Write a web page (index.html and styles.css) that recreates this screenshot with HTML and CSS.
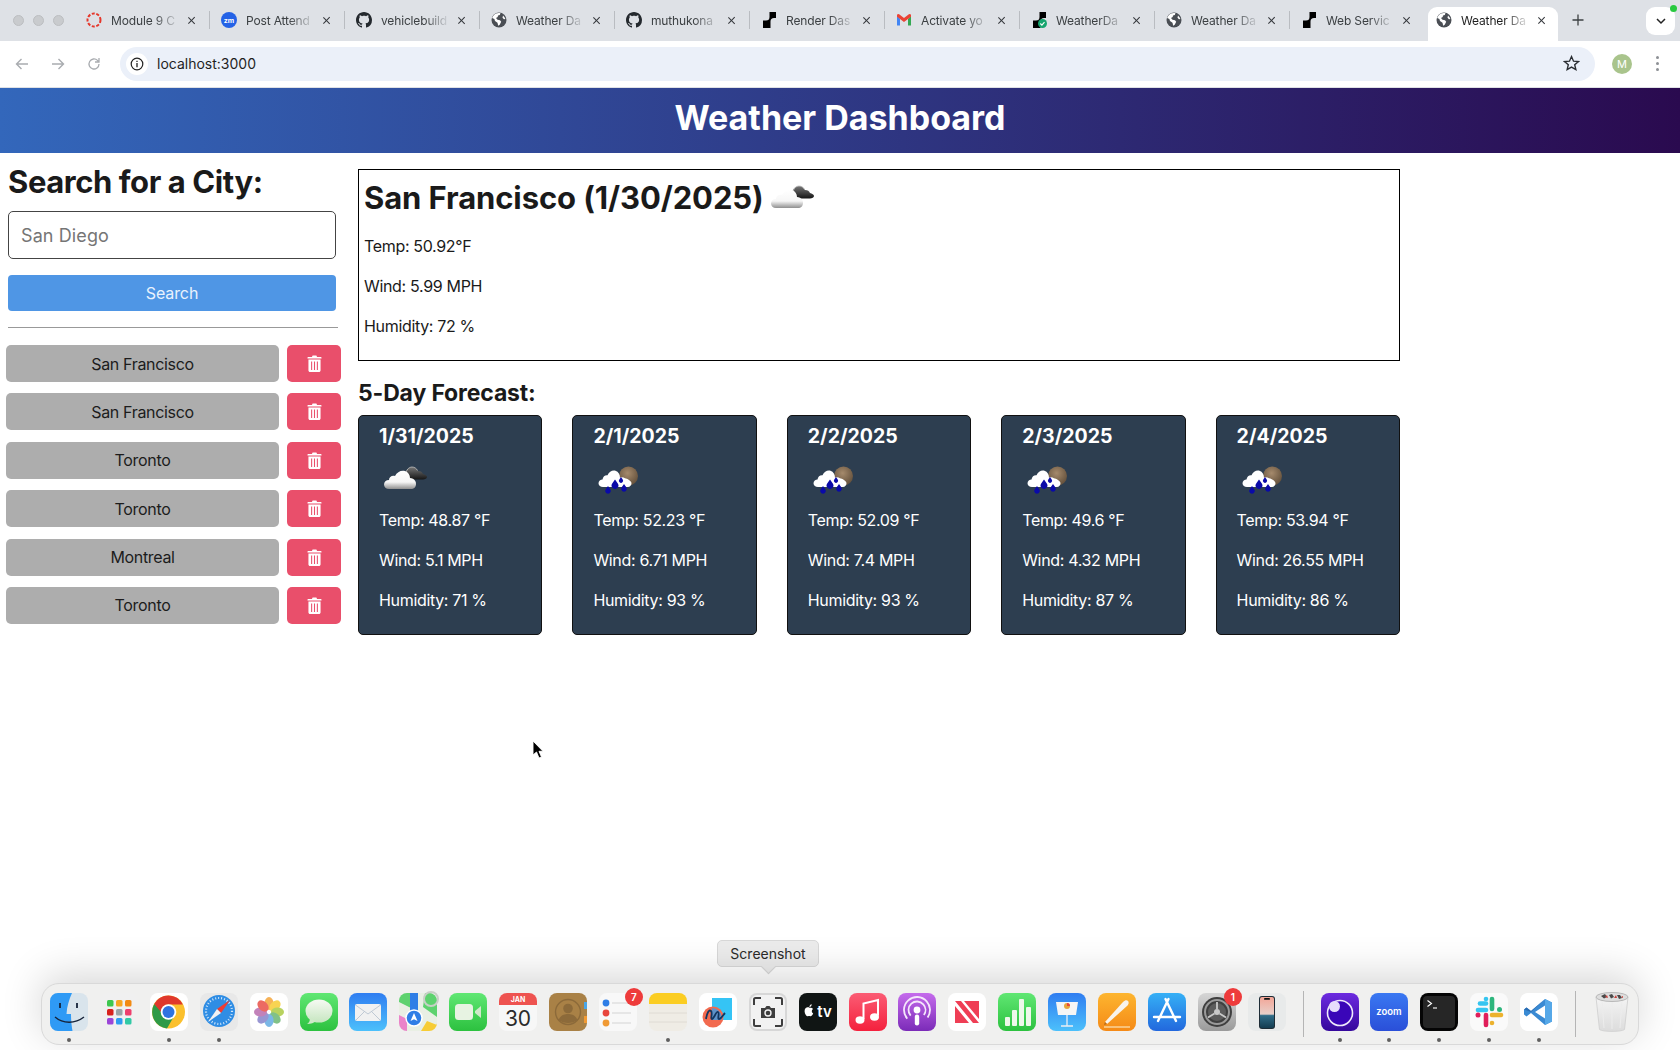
FILE: index.html
```html
<!DOCTYPE html>
<html lang="en">
<head>
<meta charset="utf-8">
<title>Weather Dashboard</title>
<link rel="stylesheet" href="styles.css">
</head>
<body>
<svg class="defs" width="0" height="0" aria-hidden="true">
  <defs>
    <linearGradient id="gCloud" x1="0" y1="0" x2="0" y2="1"><stop offset="0" stop-color="#fff"/><stop offset=".62" stop-color="#f6f6f6"/><stop offset="1" stop-color="#8f8f8f"/></linearGradient>
    <linearGradient id="gDark" x1="0" y1="0" x2="0" y2="1"><stop offset="0" stop-color="#777"/><stop offset="1" stop-color="#161616"/></linearGradient>
    <radialGradient id="gMoon" cx=".45" cy=".35" r=".7"><stop offset="0" stop-color="#a58a6c"/><stop offset="1" stop-color="#5f4c38"/></radialGradient>
    <linearGradient id="gBlue" x1="0" y1="0" x2="0" y2="1"><stop offset="0" stop-color="#2f7df1"/><stop offset="1" stop-color="#4cc0fb"/></linearGradient>
    <linearGradient id="gBlue2" x1="0" y1="0" x2="0" y2="1"><stop offset="0" stop-color="#35b0f6"/><stop offset="1" stop-color="#2268dd"/></linearGradient>
    <linearGradient id="gGreen" x1="0" y1="0" x2="0" y2="1"><stop offset="0" stop-color="#60e773"/><stop offset="1" stop-color="#2cc13f"/></linearGradient>
    <linearGradient id="gMusic" x1="0" y1="0" x2="0" y2="1"><stop offset="0" stop-color="#fb5c74"/><stop offset="1" stop-color="#f4213d"/></linearGradient>
    <linearGradient id="gPod" x1="0" y1="0" x2="0" y2="1"><stop offset="0" stop-color="#c56bec"/><stop offset="1" stop-color="#7b2bb8"/></linearGradient>
    <linearGradient id="gPages" x1="0" y1="0" x2="0" y2="1"><stop offset="0" stop-color="#fdb52f"/><stop offset="1" stop-color="#f58a17"/></linearGradient>
    <linearGradient id="gPurple" x1="0" y1="0" x2="0" y2="1"><stop offset="0" stop-color="#6d2be0"/><stop offset="1" stop-color="#35089c"/></linearGradient>
    <linearGradient id="gZoom" x1="0" y1="0" x2="0" y2="1"><stop offset="0" stop-color="#3a78f2"/><stop offset="1" stop-color="#2a4fd8"/></linearGradient>
    <linearGradient id="gSet" x1="0" y1="0" x2="0" y2="1"><stop offset="0" stop-color="#d6d6d6"/><stop offset="1" stop-color="#9a9a9a"/></linearGradient>
    <linearGradient id="gPhone" x1="0" y1="0" x2="0" y2="1"><stop offset="0" stop-color="#f3a596"/><stop offset=".55" stop-color="#e8cfc9"/><stop offset=".6" stop-color="#2f6c88"/><stop offset="1" stop-color="#143c50"/></linearGradient>
    <linearGradient id="gBin" x1="0" y1="0" x2="0" y2="1"><stop offset="0" stop-color="#f4f4f4"/><stop offset="1" stop-color="#dcdcdc"/></linearGradient>
    <linearGradient id="gMsg" x1="0" y1="0" x2="0" y2="1"><stop offset="0" stop-color="#f6faf3"/><stop offset="1" stop-color="#c6e6c0"/></linearGradient>
    <symbol id="wClouds" viewBox="0 0 50 50">
      <path fill="url(#gDark)" d="M26 21c0-4 3-8 7-8 3 0 5 2 6 4 3 0 4 1 5 3 2 .5 4 1.500 4 3 0 1.500-2 2.500-4 2.500H30z"/>
      <path fill="none" stroke="#bdbdbd" stroke-width=".8" d="M27 20c0-4 3-7 6-7 2.500 0 4.500 1.500 5.500 3.500"/>
      <path fill="url(#gCloud)" d="M10 35c-3 0-5-2-5-4.500S7 26 10 26c0-3 3-5 6-4 2-4 6-6 10-5 3 1 5 4 5 7 1 0 2 .2 3 .8 2 1 3 3 3 5.200 0 3-2 5-5 5z"/>
    </symbol>
    <symbol id="wRain" viewBox="0 0 50 50">
      <circle cx="35.500" cy="22" r="9.500" fill="url(#gMoon)"/>
      <path fill="#fff" d="M10 33c-2.500 0-4.500-1.500-4.500-3.800s2-3.700 4-3.700c.5-3 2.500-4.500 5-4.200 1.500-3.500 5-5.500 8-4.500 3 1 4.500 4 4.500 7 1.500-.8 3.500-.5 5 .5 2 .3 6.500 2.500 6.500 5 0 2-1.500 3.700-3.500 3.700z"/>
      <path fill="#0a0aa8" d="M15 32l2.300 3.300a2.800 2.800 0 1 1-4.600 0zM22 25.500l2.800 4a3.400 3.400 0 1 1-5.600 0zM28 23l1.700 2.500a2.100 2.100 0 1 1-3.400 0zM31 30l2.300 3.200a2.800 2.800 0 1 1-4.600 0z"/>
    </symbol>
    <symbol id="bin" viewBox="0 0 14 16">
      <path fill="#fff" d="M1 1.900h3.600L5.200.5h3.600l.6 1.400H13a.6.6 0 0 1 .6.600v.7H.4v-.7A.6.6 0 0 1 1 1.900z"/>
      <path fill="#fff" fill-rule="evenodd" d="M1.300 4.300h11.400v10.200c0 .8-.7 1.500-1.500 1.500H2.800c-.8 0-1.500-.7-1.500-1.500zM3.800 6v8h1V6zm2.700 0v8h1V6zm2.700 0v8h1V6z"/>
    </symbol>
    <symbol id="github" viewBox="0 0 16 16">
      <path fill="#24292e" d="M8 0C3.580 0 0 3.580 0 8c0 3.540 2.290 6.530 5.470 7.590.4.070.55-.17.55-.38 0-.19-.01-.82-.01-1.490-2.010.37-2.530-.49-2.690-.94-.09-.23-.48-.94-.82-1.130-.28-.15-.68-.52-.01-.53.63-.01 1.080.58 1.230.82.72 1.210 1.870.87 2.330.66.070-.52.28-.87.51-1.070-1.780-.2-3.640-.89-3.640-3.950 0-.87.31-1.590.82-2.150-.08-.2-.36-1.020.08-2.120 0 0 .67-.21 2.200.82.64-.18 1.320-.27 2-.27.68 0 1.360.09 2 .27 1.530-1.040 2.200-.82 2.200-.82.44 1.100.16 1.920.08 2.120.51.56.82 1.270.82 2.150 0 3.070-1.870 3.750-3.650 3.950.29.25.54.73.54 1.480 0 1.070-.01 1.930-.01 2.200 0 .21.15.46.55.38A8.013 8.013 0 0 0 16 8c0-4.420-3.580-8-8-8z"/>
    </symbol>
    <symbol id="globe" viewBox="0 0 16 16">
      <circle cx="8" cy="8" r="7.500" fill="#4a4e54"/>
      <path fill="#fff" d="M5 1.500c1.500-.6 3-.7 4.500-.3L8.800 3 7 3.500 6.700 5 5 6l1.500 1.800 2.500.4 1.200 1.500-1.500 3-1.500 1-.7-3-2.500-1.700-.6-2-2.300-1C2 3.800 3.300 2.300 5 1.500zM12 3.500c1.200 1 2 2.200 2.400 3.500l-1.400.2-1.500-1.500z"/>
    </symbol>
    <symbol id="render" viewBox="0 0 16 16">
      <path fill="#000" d="M8.500 0h6.500v6h-2A3.500 3.500 0 0 0 9.500 9.500V16H2V8.500h3A3.500 3.500 0 0 0 8.500 5z"/>
    </symbol>
  </defs>
</svg>

<div class="tabstrip">
  <div class="lights"><i class="light"></i><i class="light"></i><i class="light"></i></div>
  <div class="tabs">
    <div class="tab">
      <svg class="fav" viewBox="0 0 16 16"><circle cx="8" cy="8" r="6.500" fill="none" stroke="#e5372b" stroke-width="2" stroke-dasharray="3 1.600"/></svg>
      <span class="tab-title">Module 9 C</span><span class="x"></span>
    </div>
    <div class="tab">
      <svg class="fav" viewBox="0 0 16 16"><circle cx="8" cy="8" r="8" fill="#2462e6"/><text x="8" y="10.500" class="zm">zm</text></svg>
      <span class="tab-title">Post Attend</span><span class="x"></span>
    </div>
    <div class="tab"><svg class="fav"><use href="#github"/></svg><span class="tab-title">vehiclebuild</span><span class="x"></span></div>
    <div class="tab"><svg class="fav"><use href="#globe"/></svg><span class="tab-title">Weather Da</span><span class="x"></span></div>
    <div class="tab"><svg class="fav"><use href="#github"/></svg><span class="tab-title">muthukona</span><span class="x"></span></div>
    <div class="tab"><svg class="fav"><use href="#render"/></svg><span class="tab-title">Render Das</span><span class="x"></span></div>
    <div class="tab">
      <svg class="fav" viewBox="0 0 16 16"><path fill="#4285f4" d="M1 4v9.500h3V7z"/><path fill="#34a853" d="M12 7v6.500h3V4z"/><path fill="#ea4335" d="M1 2.500v2.200l7 5.300 7-5.300V2.500l-1.800-.4L8 6 2.800 2.100z"/></svg>
      <span class="tab-title">Activate yo</span><span class="x"></span>
    </div>
    <div class="tab">
      <svg class="fav" viewBox="0 0 16 16"><use href="#render" width="16" height="16"/><circle cx="11.500" cy="11.500" r="4.500" fill="#16a56f"/><path d="M9.300 11.500l1.600 1.600 2.600-3" fill="none" stroke="#fff" stroke-width="1.100"/></svg>
      <span class="tab-title">WeatherDa</span><span class="x"></span>
    </div>
    <div class="tab"><svg class="fav"><use href="#globe"/></svg><span class="tab-title">Weather Da</span><span class="x"></span></div>
    <div class="tab"><svg class="fav"><use href="#render"/></svg><span class="tab-title">Web Servic</span><span class="x"></span></div>
    <div class="tab tab-active"><svg class="fav"><use href="#globe"/></svg><span class="tab-title">Weather Da</span><span class="x"></span></div>
  </div>
  <svg class="plus" viewBox="0 0 12 12"><path d="M6 .5v11M.5 6h11" stroke="#3c4043" stroke-width="1.300"/></svg>
  <div class="tabmenu"><svg width="10" height="7" viewBox="0 0 10 7"><path d="M1 1l4 4 4-4" fill="none" stroke="#222" stroke-width="1.500"/></svg><i class="recdot"></i></div>
</div>

<div class="toolbar">
  <svg class="nav" viewBox="0 0 16 16"><path d="M14 8H2.500M7.500 3l-5 5 5 5" fill="none" stroke="#a9acb0" stroke-width="1.400"/></svg>
  <svg class="nav" viewBox="0 0 16 16"><path d="M2 8h11.500M8.500 3l5 5-5 5" fill="none" stroke="#a9acb0" stroke-width="1.400"/></svg>
  <svg class="nav" viewBox="0 0 16 16"><path d="M13 8a5 5 0 1 1-1.500-3.600L13 6M13 2v4H9" fill="none" stroke="#a9acb0" stroke-width="1.300"/></svg>
  <div class="omnibox">
    <span class="info"><svg width="14" height="14" viewBox="0 0 14 14"><circle cx="7" cy="7" r="5.800" fill="none" stroke="#222" stroke-width="1.200"/><path d="M7 6v4.200M7 3.700v1.300" stroke="#222" stroke-width="1.300"/></svg></span>
    <span class="url">localhost:3000</span>
    <svg class="star" viewBox="0 0 16 16"><path d="M8 1.500l1.900 4.300 4.600.4-3.500 3 1.100 4.600L8 11.400l-4.100 2.400L5 9.200l-3.500-3 4.600-.4z" fill="none" stroke="#2b2e33" stroke-width="1.300"/></svg>
  </div>
  <span class="avatar">M</span>
  <span class="kebab"><i></i><i></i><i></i></span>
</div>

<header class="app-header"><h1>Weather Dashboard</h1></header>

<div class="layout">
  <aside class="sidebar">
    <h2 class="search-title">Search for a City:</h2>
    <input class="city-input" type="text" value="San Diego">
    <button class="search-btn">Search</button>
    <hr class="divider">
    <ul class="history">
      <li class="history-row"><button class="city-btn">San Francisco</button><button class="del-btn"><svg class="bin"><use href="#bin"/></svg></button></li>
      <li class="history-row"><button class="city-btn">San Francisco</button><button class="del-btn"><svg class="bin"><use href="#bin"/></svg></button></li>
      <li class="history-row"><button class="city-btn">Toronto</button><button class="del-btn"><svg class="bin"><use href="#bin"/></svg></button></li>
      <li class="history-row"><button class="city-btn">Toronto</button><button class="del-btn"><svg class="bin"><use href="#bin"/></svg></button></li>
      <li class="history-row"><button class="city-btn">Montreal</button><button class="del-btn"><svg class="bin"><use href="#bin"/></svg></button></li>
      <li class="history-row"><button class="city-btn">Toronto</button><button class="del-btn"><svg class="bin"><use href="#bin"/></svg></button></li>
    </ul>
  </aside>
  <main class="weather">
    <section class="today">
      <h2 class="today-title"><span>San Francisco (1/30/2025)</span><svg class="w-icon"><use href="#wClouds"/></svg></h2>
      <p>Temp: 50.92°F</p>
      <p>Wind: 5.99 MPH</p>
      <p>Humidity: 72 %</p>
    </section>
    <h3 class="forecast-title">5-Day Forecast:</h3>
    <div class="forecast">
      <article class="day"><h4>1/31/2025</h4><svg class="w-icon"><use href="#wClouds"/></svg><p>Temp: 48.87 °F</p><p>Wind: 5.1 MPH</p><p>Humidity: 71 %</p></article>
      <article class="day"><h4>2/1/2025</h4><svg class="w-icon"><use href="#wRain"/></svg><p>Temp: 52.23 °F</p><p>Wind: 6.71 MPH</p><p>Humidity: 93 %</p></article>
      <article class="day"><h4>2/2/2025</h4><svg class="w-icon"><use href="#wRain"/></svg><p>Temp: 52.09 °F</p><p>Wind: 7.4 MPH</p><p>Humidity: 93 %</p></article>
      <article class="day"><h4>2/3/2025</h4><svg class="w-icon"><use href="#wRain"/></svg><p>Temp: 49.6 °F</p><p>Wind: 4.32 MPH</p><p>Humidity: 87 %</p></article>
      <article class="day"><h4>2/4/2025</h4><svg class="w-icon"><use href="#wRain"/></svg><p>Temp: 53.94 °F</p><p>Wind: 26.55 MPH</p><p>Humidity: 86 %</p></article>
    </div>
  </main>
</div>

<svg class="cursor" viewBox="0 0 12 19"><path d="M1 1v14l3.500-3 2.500 6 2.500-1-2.500-5.700H11z" fill="#000" stroke="#fff" stroke-width=".9"/></svg>

<div class="tooltip">Screenshot</div>

<nav class="dock">
  <div class="app run"><svg viewBox="0 0 38 38"><rect width="38" height="38" rx="8" fill="#d9e4ec"/><path d="M8 0h14c-3 7-5 13-5.500 21H21c0 6 .5 11 1.500 17H8a8 8 0 0 1-8-8V8a8 8 0 0 1 8-8z" fill="#2f9af5"/><path d="M10 10v5M27 10v5" stroke="#16233a" stroke-width="1.800"/><path d="M5 24c8 7 20 7 29 0" fill="none" stroke="#16233a" stroke-width="1.400"/></svg></div>
  <div class="app"><svg viewBox="0 0 38 38"><rect width="38" height="38" rx="8" fill="#f0f0f0"/><rect x="7" y="7" width="6.500" height="6.500" rx="1.500" fill="#3dc74f"/><rect x="16" y="7" width="6.500" height="6.500" rx="1.500" fill="#f6a623"/><rect x="25" y="7" width="6.500" height="6.500" rx="1.500" fill="#f28a12"/><rect x="7" y="16" width="6.500" height="6.500" rx="1.500" fill="#d8211c"/><rect x="16" y="16" width="6.500" height="6.500" rx="1.500" fill="#9aa3a6"/><rect x="25" y="16" width="6.500" height="6.500" rx="1.500" fill="#ee3f6c"/><rect x="7" y="25" width="6.500" height="6.500" rx="1.500" fill="#9b45d8"/><rect x="16" y="25" width="6.500" height="6.500" rx="1.500" fill="#2d9cf0"/><rect x="25" y="25" width="6.500" height="6.500" rx="1.500" fill="#31c9a5"/></svg></div>
  <div class="app run"><svg viewBox="0 0 38 38"><rect width="38" height="38" rx="8" fill="#fff"/><circle cx="18.500" cy="19" r="16.500" fill="#fbc02d"/><path d="M18.500 2.500A16.500 16.500 0 0 0 4.200 11l7 12-.3-4a7.600 7.600 0 0 1 7.600-7.600h14.300A16.500 16.500 0 0 0 18.500 2.500z" fill="#e0382c"/><path d="M4.200 11A16.500 16.500 0 0 0 17 35.400l7-12.200a8 8 0 0 1-13-4.200z" fill="#2e9a47"/><circle cx="18.500" cy="19" r="7.800" fill="#fff"/><circle cx="18.500" cy="19" r="6" fill="#2f73e0"/></svg></div>
  <div class="app run"><svg viewBox="0 0 38 38"><rect width="38" height="38" rx="8" fill="#e8e8e8"/><circle cx="19" cy="18" r="16" fill="#2f8de4"/><circle cx="19" cy="18" r="13" fill="none" stroke="#d3e7f9" stroke-width="2.200" stroke-dasharray="1 2"/><path d="M30 7L17 16l4 4z" fill="#ef3b32"/><path d="M8 29l13-9-4-4z" fill="#f2f2f2"/></svg></div>
  <div class="app"><svg viewBox="0 0 38 38"><rect width="38" height="38" rx="8" fill="#fff"/><g opacity=".8"><ellipse cx="19" cy="10.500" rx="4.600" ry="6.500" fill="#f4a02e"/><ellipse cx="19" cy="10.500" rx="4.600" ry="6.500" fill="#f7c928" transform="rotate(45 19 19)"/><ellipse cx="19" cy="10.500" rx="4.600" ry="6.500" fill="#a7c838" transform="rotate(90 19 19)"/><ellipse cx="19" cy="10.500" rx="4.600" ry="6.500" fill="#62b26a" transform="rotate(135 19 19)"/><ellipse cx="19" cy="10.500" rx="4.600" ry="6.500" fill="#5aa6e0" transform="rotate(180 19 19)"/><ellipse cx="19" cy="10.500" rx="4.600" ry="6.500" fill="#7f7cc8" transform="rotate(225 19 19)"/><ellipse cx="19" cy="10.500" rx="4.600" ry="6.500" fill="#b463a8" transform="rotate(270 19 19)"/><ellipse cx="19" cy="10.500" rx="4.600" ry="6.500" fill="#e8453c" transform="rotate(315 19 19)"/></g></svg></div>
  <div class="app"><svg viewBox="0 0 38 38"><rect width="38" height="38" rx="8" fill="url(#gGreen)"/><ellipse cx="19" cy="18" rx="13.500" ry="11.500" fill="url(#gMsg)"/><path d="M10 25c0 3-1 5-3 6 4 0 7-1 9-3z" fill="#cfe9c9"/></svg></div>
  <div class="app"><svg viewBox="0 0 38 38"><rect width="38" height="38" rx="8" fill="url(#gBlue)"/><rect x="6" y="11" width="26" height="17" rx="2" fill="#f1f1f1"/><path d="M6.500 12L19 21l12.500-9M6.500 27.500l9-9M31.500 27.500l-9-9" fill="none" stroke="#b9c4d0" stroke-width=".9"/></svg></div>
  <div class="app"><svg viewBox="0 0 38 38"><rect width="38" height="38" rx="8" fill="#e9efe4"/><path d="M0 8a8 8 0 0 1 8-8h4v15L0 9z" fill="#5ed26f"/><path d="M26 0h4a8 8 0 0 1 8 8v16L24 14z" fill="#5ed26f"/><circle cx="32" cy="6" r="7" fill="none" stroke="#c9cfc7" stroke-width="2"/><path d="M0 22l8 4v12H8a8 8 0 0 1-8-8z" fill="#ea83c9"/><path d="M22 38l6-10 10 4v-2 0a8 8 0 0 1-8 8z" fill="#f7cc35"/><rect x="11" y="0" width="8" height="24" fill="#2f7ee6"/><circle cx="15" cy="25" r="8" fill="#2f7ee6" stroke="#fff" stroke-width="1.500"/><path d="M15 20l3.500 8-3.500-1.800L11.500 28z" fill="#fff"/></svg></div>
  <div class="app"><svg viewBox="0 0 38 38"><rect width="38" height="38" rx="8" fill="url(#gGreen)"/><rect x="6" y="11" width="18" height="16" rx="3.500" fill="#e7f3e2"/><path d="M26 18l6-5v12l-6-5z" fill="#cfe8c9"/></svg></div>
  <div class="app"><svg viewBox="0 0 38 38"><rect width="38" height="38" rx="8" fill="#f7f7f7"/><path d="M0 12V8a8 8 0 0 1 8-8h22a8 8 0 0 1 8 8v4z" fill="#ee5350"/><text x="19" y="9" class="cal-m">JAN</text><text x="19" y="33" class="cal-d">30</text></svg></div>
  <div class="app"><svg viewBox="0 0 38 38"><rect width="38" height="38" rx="8" fill="#a98146"/><rect x="35" y="9" width="3" height="7" fill="#4aa6e8"/><rect x="35" y="23" width="3" height="7" fill="#f09a34"/><circle cx="19" cy="19" r="12.500" fill="none" stroke="#8c6a3a" stroke-width="1.400"/><circle cx="19" cy="15.500" r="4.800" fill="#8c6a3a"/><path d="M9.500 27c2-5 6-6 9.500-6s7.500 1 9.500 6c-5 4-14 4-19 0z" fill="#8c6a3a"/></svg></div>
  <div class="app"><svg viewBox="0 0 38 38"><rect width="38" height="38" rx="8" fill="#f8f8f8"/><circle cx="7" cy="10" r="3.400" fill="#2f7ee6"/><circle cx="7" cy="20" r="3.400" fill="#e8453c"/><circle cx="7" cy="30" r="3.400" fill="#f09a34"/><path d="M13 10h19M13 20h19M13 30h19" stroke="#d4d4d4" stroke-width="1"/></svg><b class="badge">7</b></div>
  <div class="app run"><svg viewBox="0 0 38 38"><rect width="38" height="38" rx="8" fill="#efece5"/><path d="M0 11V8a8 8 0 0 1 8-8h22a8 8 0 0 1 8 8v3z" fill="#fbcd22"/><path d="M0 20h38M0 29h38" stroke="#dcd8d0" stroke-width=".8"/></svg></div>
  <div class="app"><svg viewBox="0 0 38 38"><rect width="38" height="38" rx="8" fill="#fff"/><rect x="13" y="5" width="20" height="22" fill="#35c4f5"/><circle cx="14" cy="24" r="10.500" fill="#f26a4f"/><path d="M13 15a10 10 0 0 1 10 10 9 9 0 0 1-.7 2H13z" fill="#5d92c9"/><path d="M7 26c1-6 3-10 5-8s-1 8 1 8 4-8 6-7-1 7 1 7 4-4 6-6" fill="none" stroke="#12355f" stroke-width="1.800"/></svg></div>
  <div class="app"><svg viewBox="0 0 38 38"><rect width="38" height="38" rx="8" fill="#d7d7d7"/><rect x="2" y="2" width="34" height="34" rx="6" fill="#f2f2f2"/><path d="M5 12V6.500A1.500 1.500 0 0 1 6.500 5H12M26 5h5.500A1.500 1.500 0 0 1 33 6.500V12M33 26v5.500a1.500 1.500 0 0 1-1.500 1.500H26M12 33H6.500A1.500 1.500 0 0 1 5 31.500V26" fill="none" stroke="#3e3e3e" stroke-width="2"/><path d="M12 15h4l1.500-2h3l1.500 2h4v10H12z" fill="#3e3e3e"/><circle cx="19" cy="20" r="3" fill="none" stroke="#f2f2f2" stroke-width="1.400"/></svg></div>
  <div class="app"><svg viewBox="0 0 38 38"><rect width="38" height="38" rx="8" fill="#101514"/><path d="M10.500 14.500c-1-.5-2.800-.5-4 .8-1.300 1.400-1.200 4.500.3 6.700.7 1 1.500 1.500 2.200 1.200.8-.3 1.500-.3 2.200 0 .8.300 1.700-.3 2.300-1.400l.7-1.400c-1.800-.9-1.900-3.500-.2-4.500-.8-1.200-2.200-1.400-3.500-.9zM10.400 14c0-1.500 1-2.600 2.300-2.800.1 1.500-1 2.800-2.300 2.800z" fill="#fff"/><text x="25.500" y="24" class="tv">tv</text></svg></div>
  <div class="app"><svg viewBox="0 0 38 38"><rect width="38" height="38" rx="8" fill="url(#gMusic)"/><path d="M14.500 26V10.500L29 7v15.500" fill="none" stroke="#fff" stroke-width="2"/><ellipse cx="11" cy="27" rx="4.500" ry="3.700" fill="#fff"/><ellipse cx="25.500" cy="24" rx="4.500" ry="3.700" fill="#fff"/></svg></div>
  <div class="app"><svg viewBox="0 0 38 38"><rect width="38" height="38" rx="8" fill="url(#gPod)"/><circle cx="19" cy="17" r="13" fill="none" stroke="#f5e6fb" stroke-width="1.800" stroke-dasharray="58 24" transform="rotate(138 19 17)"/><circle cx="19" cy="17" r="8.500" fill="none" stroke="#f5e6fb" stroke-width="1.800" stroke-dasharray="38 16" transform="rotate(138 19 17)"/><circle cx="19" cy="17" r="3.400" fill="#fff"/><rect x="16.800" y="21.500" width="4.400" height="11" rx="2.200" fill="#fff"/></svg></div>
  <div class="app"><svg viewBox="0 0 38 38"><rect width="38" height="38" rx="8" fill="#fff"/><path d="M7 8h6l18 22h-6zM16 8h15v18zM7 13l14 17H7z" fill="#ef3e55"/></svg></div>
  <div class="app"><svg viewBox="0 0 38 38"><rect width="38" height="38" rx="8" fill="url(#gGreen)"/><rect x="7" y="24" width="5" height="9" rx="1" fill="#eef8ea"/><rect x="14" y="17" width="5" height="16" rx="1" fill="#eef8ea"/><rect x="21" y="6" width="5" height="27" rx="1" fill="#eef8ea"/><rect x="28" y="14" width="5" height="19" rx="1" fill="#eef8ea"/></svg></div>
  <div class="app"><svg viewBox="0 0 38 38"><rect width="38" height="38" rx="8" fill="url(#gBlue)"/><path d="M8 9h22l-2 13H10z" fill="#f5f5f5"/><circle cx="19" cy="13" r="3" fill="#e8a53c"/><path d="M19 10a3 3 0 0 1 3 3h-3z" fill="#e8453c"/><path d="M19 22v11M13 33h12" stroke="#e9eef4" stroke-width="1.300"/></svg></div>
  <div class="app"><svg viewBox="0 0 38 38"><rect width="38" height="38" rx="8" fill="url(#gPages)"/><path d="M7 29L25 9c2-2 4-2 5-1s1 3-1 5L9 31z" fill="#f8f3ec"/><path d="M6 34h26" stroke="#fbd7a3" stroke-width="1.400"/><path d="M7 29l-1 3 3-1z" fill="#b96b18"/></svg></div>
  <div class="app"><svg viewBox="0 0 38 38"><rect width="38" height="38" rx="8" fill="url(#gBlue2)"/><path d="M20.500 6L10 28M17.500 6L28 28M6 24h26" fill="none" stroke="#fff" stroke-width="2.400" stroke-linecap="round"/></svg></div>
  <div class="app"><svg viewBox="0 0 38 38"><rect width="38" height="38" rx="8" fill="url(#gSet)"/><circle cx="19" cy="19" r="15" fill="#3f3f3f"/><circle cx="19" cy="19" r="12" fill="none" stroke="#9a9a9a" stroke-width="2"/><circle cx="19" cy="19" r="9" fill="#5c5c5c"/><circle cx="19" cy="19" r="3" fill="#c9c9c9"/><path d="M19 16V9M21.500 20.500l6.500 4M16.500 20.500l-6.500 4" stroke="#c9c9c9" stroke-width="1.800"/></svg><b class="badge">1</b></div>
  <div class="app"><svg viewBox="0 0 38 38"><rect width="38" height="38" rx="8" fill="#e8eaea"/><rect x="11" y="3" width="16" height="33" rx="3" fill="#1d2c36"/><rect x="12" y="4" width="14" height="31" rx="2" fill="url(#gPhone)"/><rect x="16" y="5" width="6" height="1.800" rx=".9" fill="#111"/></svg></div>
  <span class="dock-sep"></span>
  <div class="app run"><svg viewBox="0 0 38 38"><rect width="38" height="38" rx="8" fill="url(#gPurple)"/><circle cx="19" cy="20" r="12.500" fill="#3a06b8" stroke="#efe9fb" stroke-width="1.600"/><circle cx="13.500" cy="13.500" r="5.500" fill="#e7ddfb"/></svg></div>
  <div class="app run"><svg viewBox="0 0 38 38"><rect width="38" height="38" rx="8" fill="url(#gZoom)"/><text x="19" y="22" class="zoomtxt">zoom</text></svg></div>
  <div class="app run"><svg viewBox="0 0 38 38"><rect width="38" height="38" rx="8" fill="#050505"/><rect x="3" y="3" width="32" height="32" rx="4" fill="#262626"/><path d="M7.500 7.500l4 3-4 3" fill="none" stroke="#fff" stroke-width="1.100"/><path d="M13 15h4" stroke="#fff" stroke-width="1.100"/></svg></div>
  <div class="app run"><svg viewBox="0 0 38 38"><rect width="38" height="38" rx="8" fill="#fafafa"/><path d="M16 10.500H10" stroke="#36c5f0" stroke-width="4.600" stroke-linecap="round"/><path d="M16 6v0" stroke="#36c5f0" stroke-width="4.600" stroke-linecap="round"/><path d="M8 17h8" stroke="#36c5f0" stroke-width="4.600" stroke-linecap="round"/><path d="M22 6v10" stroke="#2eb67d" stroke-width="4.600" stroke-linecap="round"/><path d="M29.500 16.500v0" stroke="#2eb67d" stroke-width="5" stroke-linecap="round"/><path d="M22 22h9" stroke="#ecb22e" stroke-width="4.600" stroke-linecap="round"/><path d="M22 30v0" stroke="#ecb22e" stroke-width="4.600" stroke-linecap="round"/><path d="M16 22v10" stroke="#e01e5a" stroke-width="4.600" stroke-linecap="round"/><path d="M8 22v0" stroke="#e01e5a" stroke-width="5" stroke-linecap="round"/></svg></div>
  <div class="app run"><svg viewBox="0 0 38 38"><rect width="38" height="38" rx="8" fill="#fff"/><path d="M25 6l7 3.500v19L25 32 11 20l-4.500 3.500L4 21.500V16.500l2.500-2 4.500 3.500z" fill="#3a8ad3"/><path d="M25 6l7 3.500v19L25 32z" fill="#56a8e8"/><path d="M25 12.500L15 19l10 6.500z" fill="#fff"/><path d="M25 6L11 18 6.500 14.500 4 16.500l7 2.500z" fill="#2a6cb2"/></svg></div>
  <span class="dock-sep"></span>
  <div class="app"><svg class="trash" viewBox="0 0 38 38"><path d="M3 4h32l-3.500 32.500c-3 2.500-22 2.500-25 0z" fill="url(#gBin)" stroke="#d4d4d4"/><path d="M9 8l2 27M19 8v28M29 8l-2 27" stroke="#ececec" stroke-width="1"/><ellipse cx="19" cy="4" rx="16" ry="4.500" fill="#dedede" stroke="#b8b8b8"/><path d="M8 3l4-2 2 3-3 1.500zM16 2l3-1 2 3-3 1.500zM24 2l3 0 2 3-3 1z" fill="#4a4a4a"/><path d="M12 4l2-2 1 3zM21 5l2-3 1 3zM28 4l2-1v2z" fill="#c8403a"/></svg></div>
</nav>
</body>
</html>
```

FILE: styles.css
```css
* { box-sizing: border-box; }
html, body { margin: 0; padding: 0; }
body {
  width: 1680px;
  height: 1050px;
  position: relative;
  overflow: hidden;
  background: #fff;
  color: #1a1a1a;
  font-family: Inter, "Liberation Sans", sans-serif;
  font-size: 16px;
}
.defs { position: absolute; }

/* browser chrome */
.tabstrip {
  height: 41px;
  background: #dee1e6;
  display: flex;
  align-items: flex-end;
  position: relative;
}
.lights { width: 75px; height: 41px; display: flex; align-items: center; gap: 9px; padding-left: 13px; }
.light { width: 11px; height: 11px; border-radius: 50%; background: #c9cbce; border: 1px solid #bcbec1; }
.tabs { display: flex; height: 34px; }
.tab {
  width: 135px;
  height: 34px;
  display: flex;
  align-items: center;
  padding: 0 13px 8px 11px;
  position: relative;
  font-size: 12px;
  color: #3c4043;
}
.tab::after {
  content: "";
  position: absolute;
  right: 0;
  top: 4px;
  height: 18px;
  border-right: 1px solid #b9bcc1;
}
.tab:nth-last-child(2)::after, .tab-active::after { display: none; }
.fav { width: 16px; height: 16px; flex: none; }
.zm { font: 700 7px Inter, sans-serif; fill: #fff; text-anchor: middle; }
.tab-title {
  margin-left: 9px;
  width: 69px;
  flex: none;
  white-space: nowrap;
  letter-spacing: -.15px;
  -webkit-mask-image: linear-gradient(90deg, #000 62%, transparent 100%);
  mask-image: linear-gradient(90deg, #000 62%, transparent 100%);
}
.x { width: 9px; height: 9px; margin-left: 7px; flex: none; position: relative; }
.x::before, .x::after {
  content: "";
  position: absolute;
  left: 4px;
  top: 0;
  width: 1.3px;
  height: 9px;
  background: #33363a;
  transform: rotate(45deg);
}
.x::after { transform: rotate(-45deg); }
.tab-active {
  width: 130px;
  margin: 0 2px 0 3px;
  padding-left: 8px;
  background: #fff;
  border-radius: 9px 9px 0 0;
  color: #1f1f1f;
}
.plus { width: 12px; height: 12px; margin: 0 0 15px 12px; flex: none; }
.tabmenu {
  width: 29px;
  height: 28px;
  margin: 0 5px 6px auto;
  background: #fff;
  border-radius: 9px;
  display: flex;
  align-items: center;
  justify-content: center;
  position: relative;
}
.recdot {
  position: absolute;
  right: -2px;
  top: -2px;
  width: 7px;
  height: 7px;
  border-radius: 50%;
  background: #27c93f;
}

.toolbar {
  height: 47px;
  background: #fff;
  border-bottom: 1px solid #dfe1e5;
  display: flex;
  align-items: center;
  padding: 5px 18px 6px 14px;
}
.nav { width: 16px; height: 16px; margin-right: 20px; flex: none; }
.omnibox {
  width: 1475px;
  margin-left: -2px;
  height: 34px;
  background: #ebf0f9;
  border-radius: 17px;
  display: flex;
  align-items: center;
  padding: 0 15px 0 6px;
  font-size: 14px;
}
.info {
  width: 22px;
  height: 22px;
  border-radius: 50%;
  background: #fff;
  display: flex;
  align-items: center;
  justify-content: center;
}
.url { margin-left: 9px; color: #1f1f1f; }
.star { width: 17px; height: 17px; margin-left: auto; }
.avatar {
  width: 20px;
  height: 20px;
  margin-left: 17px;
  border-radius: 50%;
  background: #a9c48c;
  color: #fff;
  font-size: 11px;
  display: flex;
  align-items: center;
  justify-content: center;
}
.kebab { margin-left: 24px; display: flex; flex-direction: column; gap: 3px; }
.kebab i { width: 3px; height: 3px; border-radius: 50%; background: #8d9095; }

/* app */
.app-header {
  height: 65px;
  padding-bottom: 6px;
  background: linear-gradient(90deg, #3367bb 0%, #2a0a4f 100%);
  display: flex;
  align-items: center;
  justify-content: center;
}
.app-header h1 { margin: 0; color: #fff; font-size: 34px; font-weight: 700; line-height: 1; }

.layout { display: grid; grid-template-columns: 358px 1042px; }
.sidebar { padding-top: 10px; display: flex; flex-direction: column; }
.search-title { margin: 0 0 10px 8px; font-size: 31px; letter-spacing: -.42px; font-weight: 700; line-height: 38px; }
.city-input {
  width: 328px;
  height: 48px;
  margin-left: 8px;
  padding: 0 12px;
  border: 1px solid #444;
  border-radius: 5px;
  font: 18px Inter, sans-serif;
  letter-spacing: .1px;
  color: #757575;
  background: #fff;
}
.search-btn {
  width: 328px;
  height: 36px;
  margin: 16px 0 0 8px;
  background: #4f96e5;
  color: #e8f2fd;
  border: 0;
  border-radius: 4px;
  font: 16px Inter, sans-serif;
  letter-spacing: -.1px;
}
.divider { width: 330px; margin: 16px 0 17px 8px; border: 0; border-top: 1px solid #999; }
.history { list-style: none; margin: 0 0 0 6px; padding: 0; display: flex; flex-direction: column; gap: 11.4px; }
.history-row { display: flex; gap: 8px; }
.city-btn {
  width: 273px;
  height: 37px;
  background: #adadad;
  color: #1c1c1c;
  border: 0;
  border-radius: 5px;
  font: 16px Inter, sans-serif;
  letter-spacing: -.33px;
}
.del-btn {
  width: 54px;
  height: 37px;
  background: #e94f6b;
  border: 0;
  border-radius: 5px;
  display: flex;
  align-items: center;
  justify-content: center;
  padding: 0;
}
.bin { width: 15px; height: 17px; }

.weather { padding-top: 16px; }
.today {
  height: 192px;
  border: 1px solid #000;
  padding: 9px 5px 0;
}
.today p { margin: 0 0 16px; line-height: 24px; letter-spacing: -.33px; }
.today-title {
  margin: 0 0 17px;
  height: 38px;
  font-size: 31px;
  letter-spacing: -.1px;
  font-weight: 700;
  line-height: 38px;
  display: flex;
  align-items: center;
  gap: 2px;
}
.w-icon { width: 50px; height: 50px; flex: none; display: block; }
.forecast-title { margin: 17px 0 7px; font-size: 23px; letter-spacing: -.15px; font-weight: 700; line-height: 30px; }
.forecast { display: grid; grid-template-columns: repeat(5, 1fr); gap: 30px; }
.day {
  height: 220px;
  background: #2d3e50;
  color: #fff;
  border: 1px solid #111;
  border-radius: 5px;
  padding: 8px 20px 0;
}
.day h4 { margin: 0 0 6px; font-size: 19.5px; font-weight: 700; line-height: 24px; }
.day .w-icon { margin-bottom: 4px; }
.day p { margin: 0 0 16px; line-height: 24px; letter-spacing: -.33px; }

/* overlays */
.cursor { position: absolute; left: 532px; top: 740px; width: 12px; height: 19px; }
.tooltip {
  position: absolute;
  left: 717px;
  top: 940px;
  width: 102px;
  height: 27px;
  background: #ececec;
  border: 1px solid #d8d8d8;
  border-radius: 5px;
  font-size: 14px;
  color: #2a2a2a;
  display: flex;
  align-items: center;
  justify-content: center;
}
.tooltip::after {
  content: "";
  position: absolute;
  left: 45px;
  bottom: -6px;
  width: 10px;
  height: 10px;
  background: #ececec;
  border-right: 1px solid #d8d8d8;
  border-bottom: 1px solid #d8d8d8;
  transform: rotate(45deg);
}
.dock {
  position: absolute;
  left: 41px;
  top: 983px;
  width: 1598px;
  height: 62px;
  padding: 9px 0 0 8px;
  background: #f0f0ef;
  border: 1px solid #d9d9d9;
  border-radius: 18px;
  box-shadow: 0 -8px 40px rgba(0, 0, 0, .16);
  display: flex;
  align-items: flex-start;
  gap: 11.92px;
}
.app { width: 38px; height: 38px; flex: none; position: relative; }
.app svg { width: 38px; height: 38px; display: block; overflow: visible; }
.app .trash { height: 42px; margin-top: -2px; }
.app.run::after {
  content: "";
  position: absolute;
  left: 17px;
  bottom: -11px;
  width: 4px;
  height: 4px;
  border-radius: 50%;
  background: #5f5f5f;
}
.badge {
  position: absolute;
  right: -6px;
  top: -5px;
  width: 18px;
  height: 18px;
  border-radius: 50%;
  background: #ee3b3b;
  color: #fff;
  font-size: 10px;
  font-weight: 600;
  display: flex;
  align-items: center;
  justify-content: center;
}
.dock-sep { width: 1px; height: 46px; margin: -2px 5px 0; background: #b5b5b5; flex: none; }
.cal-m { font: 700 7px Inter, sans-serif; fill: #fff; text-anchor: middle; }
.cal-d { font: 400 21px Inter, sans-serif; fill: #2a2a2a; text-anchor: middle; }
.tv { font: 600 15px Inter, sans-serif; fill: #fff; text-anchor: middle; }
.zoomtxt { font: 600 9.5px Inter, sans-serif; fill: #fff; text-anchor: middle; }
```
